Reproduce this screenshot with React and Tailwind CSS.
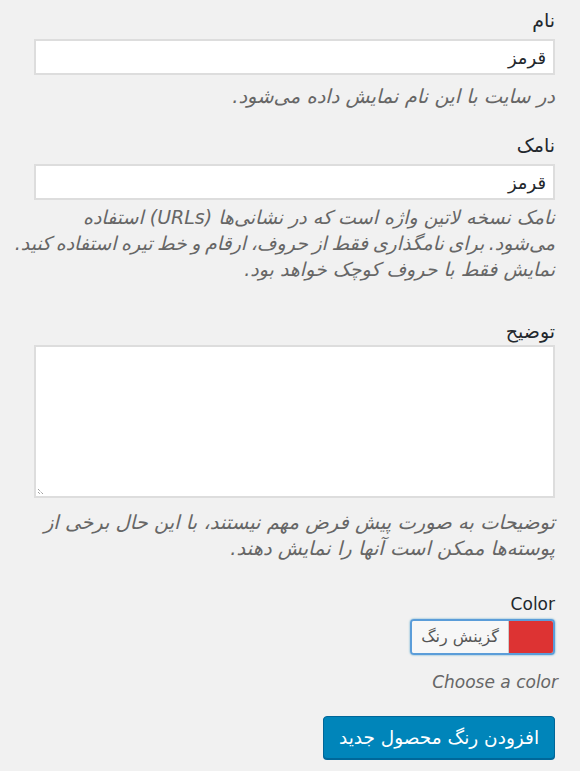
export default function App() {
  const font = { fontFamily: '"DejaVu Sans", Tahoma, sans-serif' };

  return (
    <div dir="rtl" className="min-h-screen bg-[#f1f1f1] text-[#23282d]" style={font}>
      <div className="flex flex-col pr-[25px] pl-[25px] pt-[8px] text-[19px]">
        {/* name */}
        <label className="block h-[24px] leading-[24px]">نام</label>
        <div className="mt-[7px] w-[521px] h-[36px] bg-white border-2 border-[#dddddd] px-[7px] flex items-center text-[18px]">
          قرمز
        </div>
        <p className="mt-[9px] italic text-[#666] text-[19.5px] leading-[26px]">در سایت با این نام نمایش داده می‌شود.</p>

        {/* slug */}
        <label className="block mt-[23px] h-[24px] leading-[24px]">نامک</label>
        <div className="mt-[7px] w-[521px] h-[36px] bg-white border-2 border-[#dddddd] px-[7px] flex items-center text-[18px]">
          قرمز
        </div>
        <p className="mt-[4px] italic text-[#666] leading-[26px] whitespace-nowrap">
          نامک نسخه لاتین واژه است که در نشانی‌ها (URLs) استفاده
          <br />
          <span className="[word-spacing:-1.5px]">می‌شود. برای نامگذاری فقط از حروف، ارقام و خط تیره استفاده کنید.</span>
          <br />
          نمایش فقط با حروف کوچک خواهد بود.
        </p>

        {/* description */}
        <label className="block mt-[37px] h-[24px] leading-[24px]">توضیح</label>
        <div className="relative mt-[2px] w-[521px] h-[153px] bg-white border-2 border-[#dddddd]">
          <svg className="absolute left-[1px] bottom-[1px]" width="9" height="9" viewBox="0 0 9 9">
            <path d="M1 3 L6 8 M1 6 L3 8" stroke="#777" strokeWidth="1" strokeDasharray="1 1" />
          </svg>
        </div>
        <p className="mt-[12px] italic text-[#666] text-[19.5px] leading-[26px] whitespace-nowrap">
          توضیحات به صورت پیش فرض مهم نیستند، با این حال برخی از
          <br />
          پوسته‌ها ممکن است آنها را نمایش دهند.
        </p>

        {/* color */}
        <label dir="ltr" className="block mt-[30px] h-[24px] leading-[24px] text-right text-[17px]">Color</label>
        <div className="mt-[3px] flex">
          <div className="flex w-[145px] h-[36px] rounded-[4px] border-2 border-[#5b9dd9] overflow-hidden shadow-[0_0_2px_rgba(30,140,190,0.8)]">
            <div className="w-[44px] bg-[#dd3333]" />
            <div className="flex-1 bg-[#f7f7f7] border-r border-[#cccccc] flex items-center justify-center text-[16px] text-[#555]">
              گزینش رنگ
            </div>
          </div>
        </div>
        <p dir="ltr" className="mt-[14px] italic text-[#666] text-[17px] leading-[26px] text-right mr-[-3px]">Choose a color</p>

        {/* submit */}
        <div className="mt-[21px] flex">
          <button className="w-[232px] h-[43px] rounded-[4px] bg-[#0085ba] border border-[#006799] shadow-[0_1px_0_#006799] text-white text-[18.5px]" style={font}>
            افزودن رنگ محصول جدید
          </button>
        </div>
      </div>
    </div>
  );
}
